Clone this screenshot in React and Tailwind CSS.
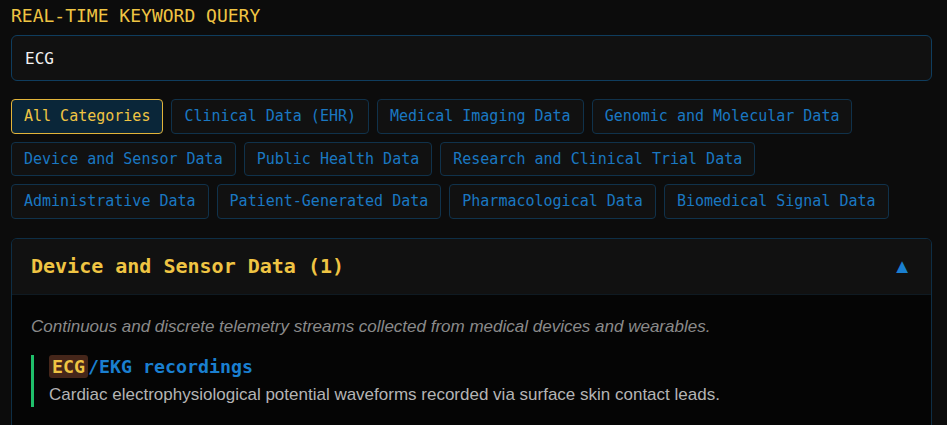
const categories = [
  'All Categories',
  'Clinical Data (EHR)',
  'Medical Imaging Data',
  'Genomic and Molecular Data',
  'Device and Sensor Data',
  'Public Health Data',
  'Research and Clinical Trial Data',
  'Administrative Data',
  'Patient-Generated Data',
  'Pharmacological Data',
  'Biomedical Signal Data',
]

const mono = "font-['DejaVu_Sans_Mono',monospace]"
const sans = "font-['Liberation_Sans',Arial,sans-serif]"

export default function App() {
  return (
    <div className="min-h-screen bg-[#0c0c0c] pl-[11px] pr-[15px] pt-[4px] pb-8">
      <div className={`${mono} text-[18px] leading-[24px] text-[#efc443] mb-[7px]`}>
        REAL-TIME KEYWORD QUERY
      </div>

      <input
        type="text"
        defaultValue="ECG"
        className={`${mono} w-full h-[46px] rounded-md border border-[#0f3d5e] bg-[#111111] px-[13px] text-[16px] text-[#f2f2f2] outline-none`}
      />

      <div className="mt-[18px] flex flex-wrap gap-x-[8px] gap-y-[8px]">
        {categories.map((c, i) => (
          <button
            key={c}
            type="button"
            className={
              i === 0
                ? `${mono} rounded border border-[#e2b43a] bg-[#0a2639] px-3 py-[6px] text-[15px] leading-[20.5px] text-[#efc443]`
                : `${mono} rounded border border-[#10324b] bg-[#111111] px-3 py-[6px] text-[15px] leading-[20.5px] text-[#1a78c2]`
            }
          >
            {c}
          </button>
        ))}
      </div>

      <div className="mt-[19px] rounded-md border border-[#0e2e45] overflow-hidden">
        <div className="flex h-[56px] items-center justify-between bg-[#111111] px-[19px] border-b border-[#0f1a22]">
          <span className={`${mono} text-[20px] font-bold text-[#efc443]`}>
            Device and Sensor Data (1)
          </span>
          <span className="text-[20px] leading-none text-[#1a7fd0]">▲</span>
        </div>
        <div className="bg-[#050505] px-[19px] pt-[20px] pb-6">
          <p className={`${sans} text-[17px] leading-[24px] italic text-[#8a8a8a]`}>
            Continuous and discrete telemetry streams collected from medical devices and wearables.
          </p>
          <div className="mt-[16px] border-l-[3px] border-[#1fbf6a] pl-[15px]">
            <div className={`${mono} text-[18.3px] font-bold leading-[24px] text-[#1a7fd0]`}>
              <mark className="rounded-[3px] bg-[#45261a] px-[3px] py-[1px] text-[#efc443]">ECG</mark>
              /EKG recordings
            </div>
            <p className={`${sans} mt-[4px] text-[17px] leading-[24px] text-[#b4b4b4]`}>
              Cardiac electrophysiological potential waveforms recorded via surface skin contact leads.
            </p>
          </div>
        </div>
      </div>
    </div>
  )
}
